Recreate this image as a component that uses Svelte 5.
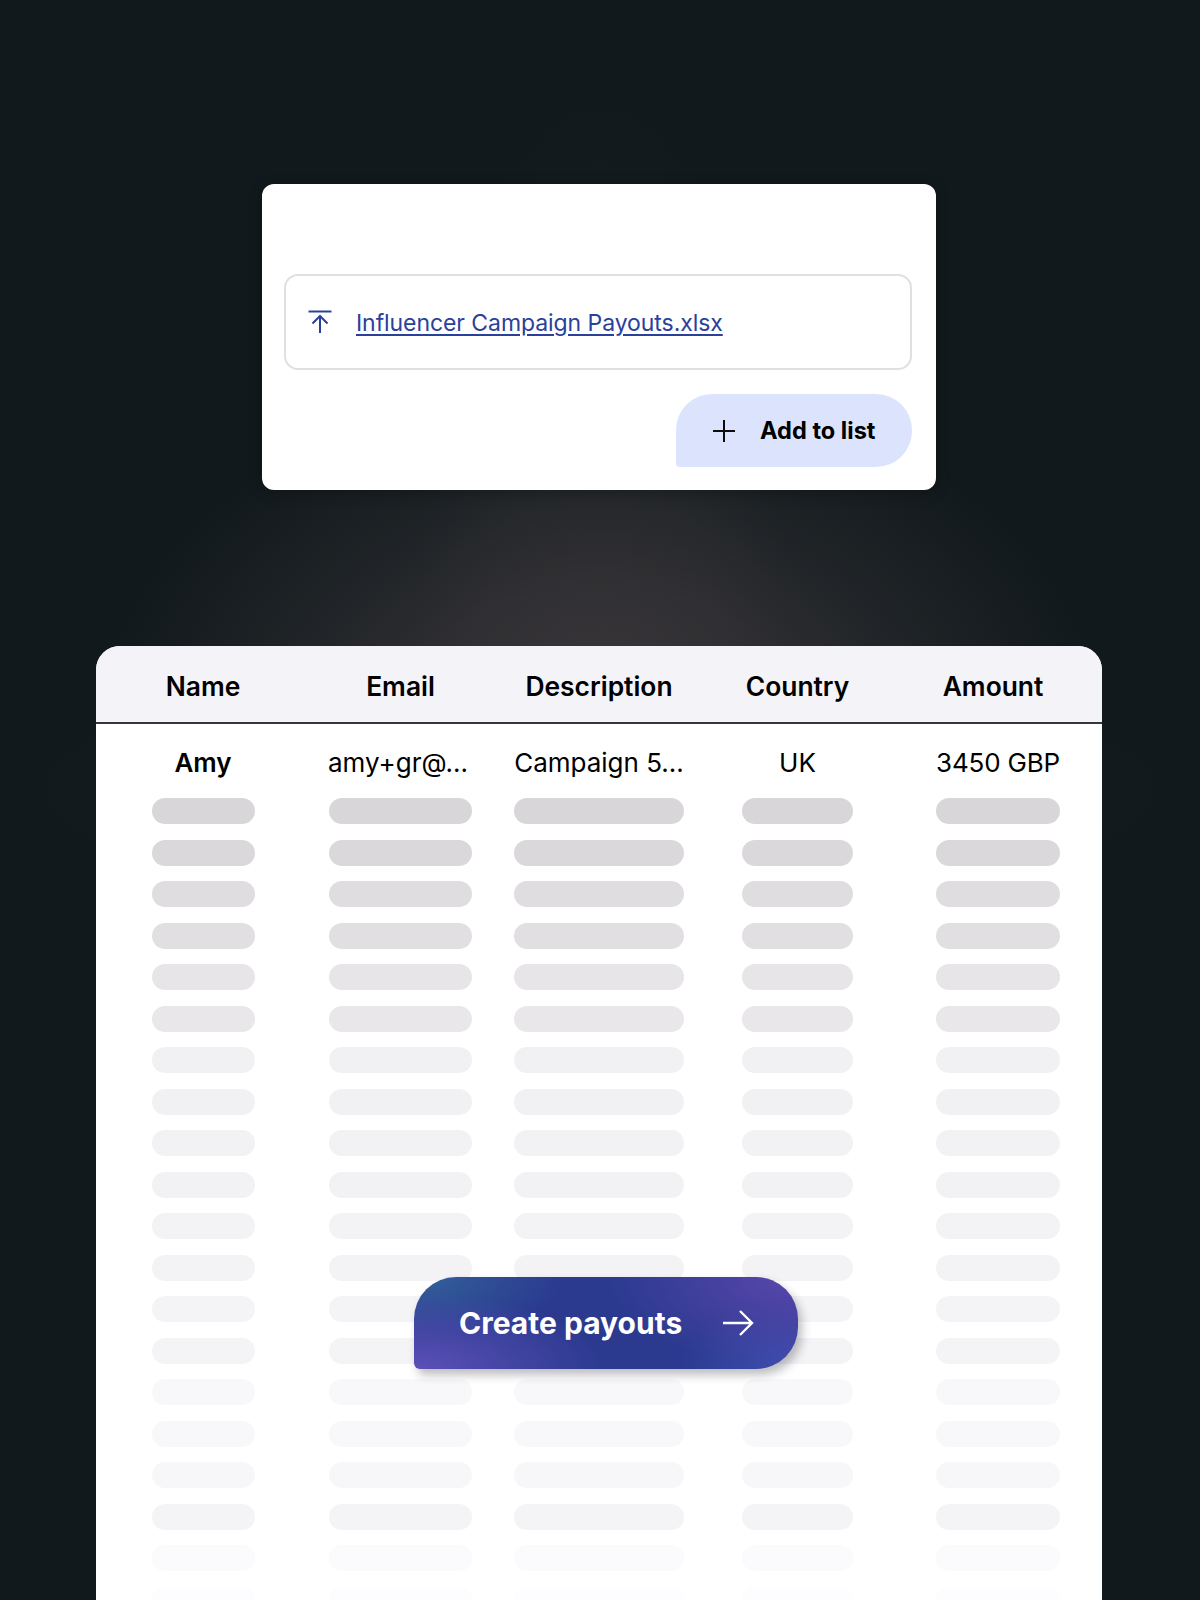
<script>
	const columns = ['Name', 'Email', 'Description', 'Country', 'Amount'];
	const first = ['Amy', 'amy+gr@...', 'Campaign 5...', 'UK', '3450 GBP'];
	// skeleton rows get lighter towards the bottom of the table
	const rowColors = [
		'#d8d6d9', '#dad8db', '#dfdde0', '#e1dfe2', '#e7e5e8', '#e9e7ea', '#f1f0f3',
		'#f1f0f3', '#f2f1f4', '#f2f1f4', '#f3f2f5', '#f3f2f5', '#f4f3f6', '#f4f3f6',
		'#f8f7fa', '#f8f7fa', '#f7f6f9', '#f4f3f6', '#fbfafc', '#fdfcfe'
	];
</script>

<main>
	<section class="upload-card">
		<div class="file-box">
			<svg class="upload-icon" viewBox="0 0 24 24" width="24" height="24" fill="none" stroke="currentColor" stroke-width="2">
				<path d="M0.5 1.5H23.5" />
				<path d="M12 23V6M4.5 13.5L12 6L19.5 13.5" />
			</svg>
			<a href="#file">Influencer Campaign Payouts.xlsx</a>
		</div>
		<div class="actions">
			<button class="add">
				<svg viewBox="0 0 22 22" width="22" height="22" fill="none" stroke="#0b0b0f" stroke-width="2">
					<path d="M11 0V22M0 11H22" />
				</svg>
				Add to list
			</button>
		</div>
	</section>

	<section class="table">
		<div class="row head">
			{#each columns as col}
				<div class="cell">{col}</div>
			{/each}
		</div>
		<div class="row first">
			{#each first as val}
				<div class="cell">{val}</div>
			{/each}
		</div>
		<div class="skeletons">
			{#each rowColors as color}
				<div class="row skeleton">
					{#each columns as col}
						<div class="cell"><span class="bar {col.toLowerCase()}" style="background: {color}"></span></div>
					{/each}
				</div>
			{/each}
		</div>
		<button class="create">
			Create payouts
			<svg viewBox="0 0 32 28" width="32" height="28" fill="none" stroke="#fff" stroke-width="2.4">
				<path d="M1 14H30M18 2L30 14L18 26" />
			</svg>
		</button>
	</section>
</main>

<style>
	:global(body) {
		margin: 0;
		background: #11191c;
	}
	main {
		height: 1600px;
		overflow: hidden;
		padding-top: 184px;
		box-sizing: border-box;
		font-family: Inter, 'Liberation Sans', sans-serif;
		/* glow behind the table: wide low ellipse, a medium one, and a tall narrow one */
		background:
			radial-gradient(ellipse 500px 340px at 600px 720px, rgba(88, 76, 80, 0.52) 0%, rgba(88, 76, 80, 0.38) 40%, rgba(88, 76, 80, 0.16) 72%, rgba(88, 76, 80, 0) 100%),
			radial-gradient(ellipse 190px 640px at 600px 720px, rgba(88, 76, 80, 0.14) 0%, rgba(88, 76, 80, 0.08) 60%, rgba(88, 76, 80, 0) 100%),
			radial-gradient(ellipse 590px 130px at 600px 790px, rgba(88, 76, 80, 0.14) 0%, rgba(88, 76, 80, 0) 100%),
			#11191c;
	}
	.upload-card {
		width: 674px;
		height: 306px;
		margin-left: 262px;
		padding: 90px 24px 0 22px;
		box-sizing: border-box;
		background: #fff;
		border-radius: 12px;
		box-shadow: 0 3px 14px rgba(0, 0, 0, 0.25);
	}
	.file-box {
		display: flex;
		align-items: center;
		gap: 24px;
		height: 96px;
		padding-left: 22px;
		box-sizing: border-box;
		border: 2px solid #e0dfe2;
		border-radius: 14px;
		color: #2a419b;
	}
	.upload-icon {
		flex: none;
	}
	.file-box a {
		padding-top: 2px;
		color: #2a419b;
		font-size: 23px;
		letter-spacing: -0.07px;
		text-underline-offset: 3px;
	}
	.actions {
		display: flex;
		justify-content: flex-end;
		margin-top: 24px;
	}
	button {
		display: flex;
		align-items: center;
		border: 0;
		font-family: inherit;
	}
	.add {
		gap: 25px;
		width: 236px;
		height: 73px;
		padding-left: 37px;
		box-sizing: border-box;
		background: #dce4fd;
		border-radius: 36px 36px 36px 4px;
		color: #000;
		font-size: 23.6px;
		font-weight: 700;
	}
	.table {
		position: relative;
		width: 1006px;
		height: 954px;
		margin: 156px 0 0 96px;
		overflow: hidden;
		background: #fff;
		border-radius: 24px 24px 0 0;
	}
	.row {
		display: grid;
		grid-template-columns: 214px 181px 216px 181px 214px;
		justify-items: center;
		align-items: center;
	}
	.head {
		height: 78px;
		padding-top: 3px;
		box-sizing: border-box;
		border-bottom: 2.5px solid #37363c;
		background: #f4f3f7;
		color: #000;
		font-size: 26.4px;
		font-weight: 600;
	}
	.first {
		height: 74px;
		padding-top: 2px;
		box-sizing: border-box;
		color: #000;
		font-size: 26px;
	}
	.first .cell:first-child {
		font-weight: 600;
	}
	.first .cell:nth-child(2) {
		margin-right: 5px;
	}
	.first .cell:last-child {
		margin-left: 6px;
		letter-spacing: -0.2px;
	}
	.head .cell:last-child {
		margin-right: 4px;
	}
	.skeleton .cell:last-child {
		margin-left: 6px;
	}
	.cell {
		white-space: nowrap;
	}
	.skeletons {
		display: flex;
		flex-direction: column;
		gap: 15.5px;
	}
	.skeleton {
		height: 26px;
	}
	.bar {
		display: block;
		height: 26px;
		border-radius: 13px;
	}
	.name { width: 103px; }
	.email { width: 143px; }
	.description { width: 170px; }
	.country { width: 111px; }
	.amount { width: 124px; }
	.create {
		position: absolute;
		left: 318px;
		top: 631px;
		gap: 40px;
		width: 384px;
		height: 92px;
		padding-left: 45px;
		box-sizing: border-box;
		border-radius: 42px 42px 42px 6px;
		color: #fff;
		font-size: 30px;
		font-weight: 700;
		background:
			radial-gradient(ellipse 190px 75px at 0% 100%, #5c50b8 0%, rgba(92, 80, 184, 0) 100%),
			radial-gradient(ellipse 150px 60px at 0% 0%, #33619a 0%, rgba(51, 97, 154, 0) 100%),
			radial-gradient(ellipse 190px 90px at 100% 0%, #5a47ad 0%, rgba(90, 71, 173, 0) 100%),
			radial-gradient(ellipse 120px 70px at 100% 100%, #3f4fb2 0%, rgba(63, 79, 178, 0) 100%),
			#2b3a8f;
		box-shadow: 4px 6px 10px rgba(40, 40, 50, 0.3);
	}
</style>
